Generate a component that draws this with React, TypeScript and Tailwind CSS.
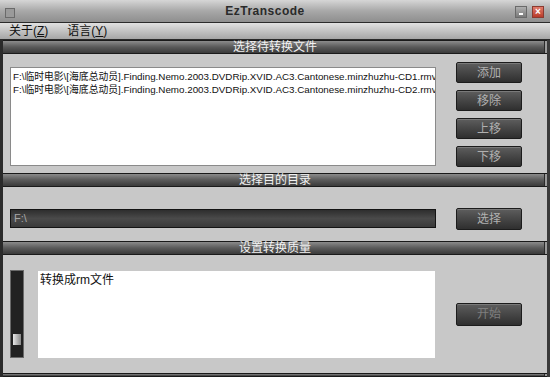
import { ReactNode } from 'react'

const FONT = { fontFamily: '"Liberation Sans", "Noto Sans CJK SC", sans-serif' }

function SectionHeader({ title }: { title: string }) {
  return (
    <div className="h-[14px] flex items-center justify-center border-y border-[#1a1a1a] bg-gradient-to-b from-[#8c8c8c] via-[#5a5a5a] to-[#3a3a3a] relative">
      <span className="text-[12px] leading-none text-[#f2f2f2]">{title}</span>
      <div className="absolute right-0 top-0 bottom-0 w-[3px] bg-[#9a9a9a] border-l border-[#2a2a2a]" />
    </div>
  )
}

function DarkButton({ children, className = '' }: { children: ReactNode; className?: string }) {
  return (
    <button
      type="button"
      className={`w-[66px] h-[21px] rounded-[2px] border border-[#1c1c1c] bg-gradient-to-b from-[#5e5e5e] to-[#2f2f2f] text-[12px] text-[#b0b0b0] flex items-center justify-center shadow-[inset_0_1px_0_#7a7a7a] ${className}`}
    >
      {children}
    </button>
  )
}

const files = [
  'F:\\临时电影\\[海底总动员].Finding.Nemo.2003.DVDRip.XVID.AC3.Cantonese.minzhuzhu-CD1.rmv',
  'F:\\临时电影\\[海底总动员].Finding.Nemo.2003.DVDRip.XVID.AC3.Cantonese.minzhuzhu-CD2.rmv',
]

export default function App() {
  return (
    <div className="w-[550px] h-[377px] overflow-hidden bg-[#c8c8c8] flex flex-col" style={FONT}>
      {/* title bar */}
      <div className="h-[23px] shrink-0 flex items-center px-[5px] bg-gradient-to-b from-[#d6d6d6] via-[#a8a8a8] to-[#8e8e8e] border-b border-[#2a2a2a]">
        <div className="w-[10px] h-[10px] bg-[#9a9a9a] border border-[#6a6a6a] mt-[3px]" />
        <div className="flex-1 text-center text-[12px] font-bold tracking-[0.5px] text-[#2a2a2a]">EzTranscode</div>
        <div className="flex gap-[5px] mt-[2px] mr-[1px]">
          <div className="w-[12px] h-[12px] bg-gradient-to-b from-[#b0b0b0] to-[#7a7a7a] border border-[#6a6a6a] flex items-end justify-center pb-[2px]">
            <div className="w-[4px] h-[2px] bg-white" />
          </div>
          <div className="w-[12px] h-[12px] bg-gradient-to-b from-[#e07a6a] to-[#b83a2a] border border-[#8a3a30] flex items-center justify-center text-white text-[10px] font-bold leading-none">
            ×
          </div>
        </div>
      </div>

      {/* menu bar */}
      <div className="h-[17px] shrink-0 flex items-center gap-[19px] px-[9px] bg-gradient-to-b from-[#e0e0e0] to-[#a6a6a6] border-b border-[#2a2a2a] text-[12px] text-[#111]">
        <span>关于(<span className="underline">Z</span>)</span>
        <span>语言(<span className="underline">Y</span>)</span>
      </div>

      {/* body */}
      <div className="flex-1 flex flex-col border-l-[3px] border-l-[#2a2a2a] border-r-[3px] border-r-[#3a3a3a] min-h-0">
        <SectionHeader title="选择待转换文件" />
        <div className="h-[119px] shrink-0 flex gap-[20px] pl-[7px] pr-[25px] pt-[8px]">
          <div className="w-[426px] h-[99px] mt-[5px] bg-white border border-[#8a8a8a] overflow-hidden pt-[2px] pl-[2px]">
            {files.map((f) => (
              <div key={f} className="whitespace-nowrap text-[9.8px] leading-[13px] text-[#111]">{f}</div>
            ))}
          </div>
          <div className="flex flex-col gap-[7px]">
            <DarkButton>添加</DarkButton>
            <DarkButton>移除</DarkButton>
            <DarkButton>上移</DarkButton>
            <DarkButton>下移</DarkButton>
          </div>
        </div>

        <SectionHeader title="选择目的目录" />
        <div className="h-[54px] shrink-0 flex items-center gap-[20px] pl-[7px] pr-[25px] pt-[9px]">
          <div className="w-[426px] h-[19px] bg-gradient-to-b from-[#2e2e2e] via-[#4a4a4a] to-[#3a3a3a] border border-[#141414] flex items-center px-[3px] text-[11px] text-[#a8a8a8]">
            F:\
          </div>
          <DarkButton className="h-[22px]">选择</DarkButton>
        </div>

        <SectionHeader title="设置转换质量" />
        <div className="h-[118px] shrink-0 flex items-center pl-[7px] pr-[25px]">
          <div className="w-[14px] h-[88px] bg-[#222] border border-[#6a6a6a] flex flex-col justify-end items-center pb-[12px]">
            <div className="w-[8px] h-[11px] bg-gradient-to-r from-[#e8e8e8] to-[#8a8a8a]" />
          </div>
          <div className="ml-[14px] w-[398px] h-[87px] bg-white px-[2px] pt-[3px] text-[12px] leading-none text-[#111]">
            转换成rm文件
          </div>
          <DarkButton className="ml-[21px] h-[23px] !text-[#7e7e7e]">开始</DarkButton>
        </div>

        <SectionHeader title="" />
      </div>
    </div>
  )
}
